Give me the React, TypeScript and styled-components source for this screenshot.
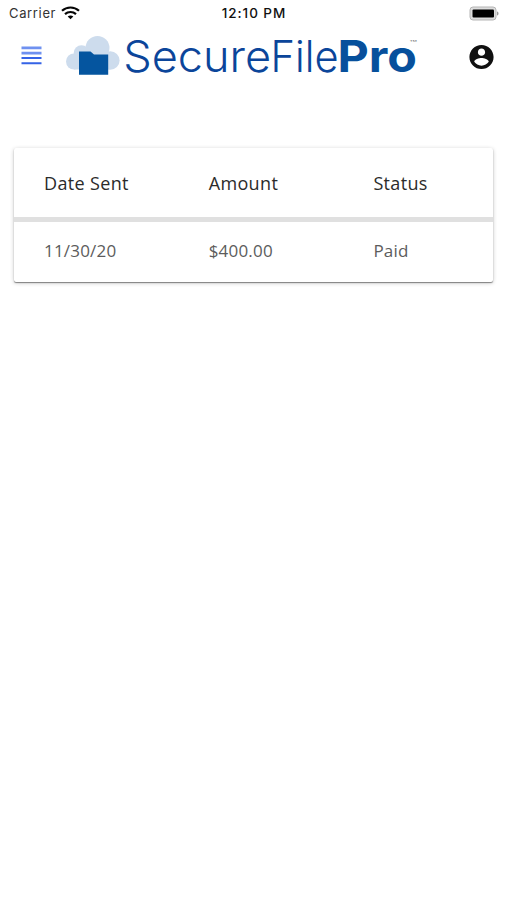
import React from 'react';
import styled, { createGlobalStyle } from 'styled-components';

const GlobalStyle = createGlobalStyle`
  * { box-sizing: border-box; }
  body { margin: 0; background: #fff; font-family: "Open Sans", "Noto Sans", sans-serif; }
`;

const Screen = styled.div`
  width: 506px;
  height: 900px;
  display: flex;
  flex-direction: column;
  overflow: hidden;
  background: #fff;
`;

const StatusBar = styled.header`
  height: 26px;
  display: grid;
  grid-template-columns: 1fr auto 1fr;
  align-items: center;
  padding: 0 7px 0 9px;
  font-family: Inter, "Liberation Sans", sans-serif;
  color: #111;
`;

const Carrier = styled.div`
  display: flex;
  align-items: center;
  gap: 5px;
  font-size: 13px;
  letter-spacing: 0.65px;
  color: #333;
`;

const Time = styled.div`
  font-size: 13.5px;
  font-weight: 500;
  letter-spacing: 0.95px;
`;

const Battery = styled.svg`
  justify-self: end;
`;

const NavBar = styled.nav`
  height: 60px;
  display: flex;
  align-items: flex-start;
  padding: 4px 10px 0 21px;
`;

const MenuButton = styled.button`
  border: 0;
  padding: 0;
  margin-top: 16px;
  width: 21px;
  height: 19px;
  background: none;
  line-height: 0;
`;

const Brand = styled.svg`
  margin-left: 23px;
  overflow: visible;
`;

const AccountButton = styled(MenuButton)`
  margin-top: 12px;
  margin-left: auto;
  width: 29px;
  height: 30px;
`;

const Card = styled.section`
  margin: 62px 13px 0 14px;
  height: 134px;
  border-radius: 2px;
  background: #fff;
  box-shadow: 0 1px 1px rgba(0, 0, 0, 0.42), 0 1px 4px rgba(0, 0, 0, 0.22);
`;

const Row = styled.div<{ $heading?: boolean }>`
  display: grid;
  grid-template-columns: 164.7px 164.7px 1fr;
  align-items: center;
  padding: 0 0 ${(p) => (p.$heading ? 0 : 4)}px 30px;
  height: ${(p) => (p.$heading ? 74 : 60)}px;
  border-bottom: ${(p) => (p.$heading ? '5px solid #e0e0e0' : '0')};
  font-size: ${(p) => (p.$heading ? 18 : 17)}px;
  letter-spacing: ${(p) => (p.$heading ? 0.35 : 0.2)}px;
  color: ${(p) => (p.$heading ? '#2b2b2b' : '#5c5c5c')};
`;

const WifiIcon = () => (
  <svg width="19" height="14" viewBox="0 0 19 14" fill="none" stroke="#050505" strokeWidth="2.2">
    <path d="M1 4.8C5.8.4 13.2.4 18 4.8" />
    <path d="M4 8.1c3.1-2.8 7.9-2.8 11 0" />
    <path d="M9.5 13.2 6.7 10.6c1.6-1.4 4-1.4 5.6 0z" fill="#050505" stroke="none" />
  </svg>
);

const Wordmark = styled.text<{ $strong?: boolean }>`
  font-family: Inter, "Liberation Sans", sans-serif;
  font-size: 44px;
  font-weight: ${(p) => (p.$strong ? 650 : 300)};
  fill: ${(p) => (p.$strong ? '#07509c' : '#0b459a')};
`;

const Logo = () => (
  <Brand width="354" height="50" viewBox="65 30 354 50" aria-label="SecureFilePro">
    <g fill="#cddced">
      <circle cx="97.5" cy="48" r="12" />
      <circle cx="81.5" cy="53" r="7.8" />
      <circle cx="74" cy="61.5" r="8" />
      <circle cx="110.3" cy="60.5" r="9.3" />
      <path d="M74 53h36v16.500H74z" />
    </g>
    <path d="M79 51.5h11.500l3.500 3h14.200v20.300H79z" fill="#05559f" />
    <Wordmark x="123.2" y="72" textLength="148" lengthAdjust="spacingAndGlyphs">Secure</Wordmark>
    <Wordmark x="270.500" y="72" textLength="68" lengthAdjust="spacingAndGlyphs">File</Wordmark>
    <Wordmark $strong x="337.500" y="72" textLength="79.500" lengthAdjust="spacingAndGlyphs">Pro</Wordmark>
    <text x="409.500" y="46" fontFamily="Inter, sans-serif" fontSize="7" fill="#777" textLength="7.500" lengthAdjust="spacingAndGlyphs">™</text>
  </Brand>
);

const App = () => (
  <>
    <GlobalStyle />
    <Screen>
      <StatusBar>
        <Carrier>Carrier<WifiIcon /></Carrier>
        <Time>12:10 PM</Time>
        <Battery width="30" height="15" viewBox="0 0 30 15">
          <rect x="1" y="1" width="26" height="13" rx="3" fill="#ddd" stroke="#b5b5b5" />
          <rect x="3.5" y="3.5" width="21.5" height="8" rx="1" fill="#000" />
          <path d="M28 5.5c2 .5 2 3.500 0 4z" fill="#999" />
        </Battery>
      </StatusBar>
      <NavBar>
        <MenuButton aria-label="Menu">
          <svg width="21" height="19" viewBox="0 0 21 19">
            <path d="M.5 1.900h20M.5 7.100h20" stroke="#6f91f0" strokeWidth="2.600" />
            <path d="M.5 12.100h20M.5 17.200h20" stroke="#3563e6" strokeWidth="2" />
          </svg>
        </MenuButton>
        <Logo />
        <AccountButton aria-label="Account">
          <svg width="29" height="30" viewBox="0 0 24 24" fill="#101010">
            <path d="M12 2C6.480 2 2 6.480 2 12s4.480 10 10 10 10-4.480 10-10S17.520 2 12 2zm0 3c1.660 0 3 1.340 3 3s-1.340 3-3 3-3-1.340-3-3 1.340-3 3-3zm0 14.200c-2.500 0-4.710-1.280-6-3.220.03-1.990 4-3.080 6-3.080 1.990 0 5.970 1.090 6 3.080-1.290 1.940-3.500 3.220-6 3.220z" />
          </svg>
        </AccountButton>
      </NavBar>
      <Card>
        <Row $heading><span>Date Sent</span><span>Amount</span><span>Status</span></Row>
        <Row><span>11/30/20</span><span>$400.00</span><span>Paid</span></Row>
      </Card>
    </Screen>
  </>
);

export default App;
